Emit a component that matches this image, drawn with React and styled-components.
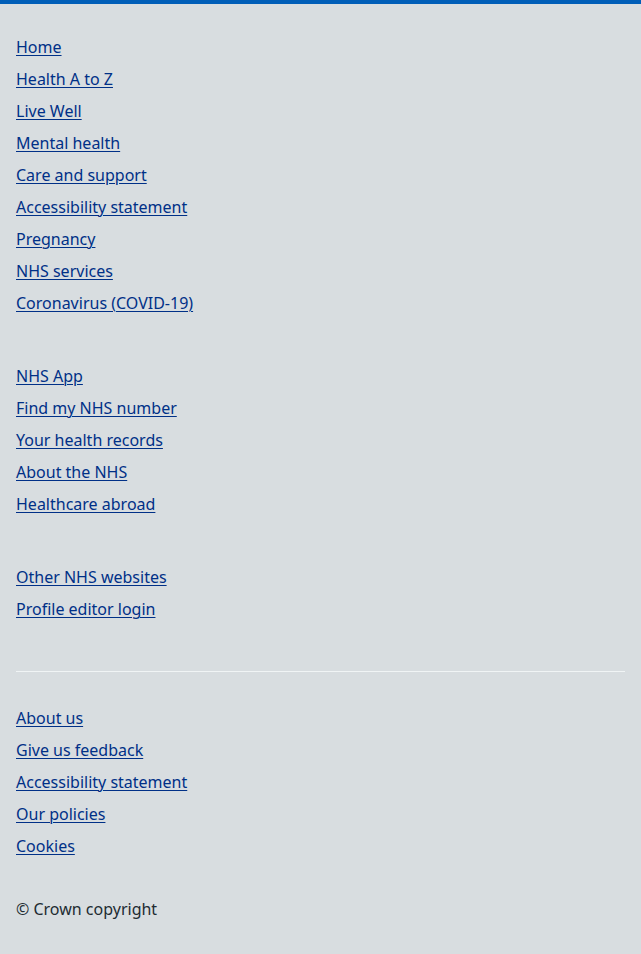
import React from 'react';
import styled, { createGlobalStyle } from 'styled-components';

const GlobalStyle = createGlobalStyle`
  html, body {
    margin: 0;
    padding: 0;
    background: #d8dde0;
  }
  body {
    font-family: 'Noto Sans', 'Liberation Sans', Arial, sans-serif;
    -webkit-font-smoothing: antialiased;
  }
`;

const primaryLinks = [
  'Home',
  'Health A to Z',
  'Live Well',
  'Mental health',
  'Care and support',
  'Accessibility statement',
  'Pregnancy',
  'NHS services',
  'Coronavirus (COVID-19)',
];

const secondaryLinks = [
  'NHS App',
  'Find my NHS number',
  'Your health records',
  'About the NHS',
  'Healthcare abroad',
];

const tertiaryLinks = ['Other NHS websites', 'Profile editor login'];

const metaLinks = [
  'About us',
  'Give us feedback',
  'Accessibility statement',
  'Our policies',
  'Cookies',
];

const Footer = styled.footer`
  min-height: 954px;
  box-sizing: border-box;
  border-top: 4px solid #005eb8;
  background: #d8dde0;
  padding: 31px 16px 34px;
`;

const Groups = styled.div`
  display: flex;
  flex-direction: column;
  gap: 49px;
`;

const List = styled.ul`
  list-style: none;
  margin: 0;
  padding: 0;
  display: flex;
  flex-direction: column;
  gap: 8px;
`;

const Item = styled.li`
  font-size: 16px;
  line-height: 24px;
`;

const Link = styled.a`
  color: #003087;
  text-decoration: underline;
  text-decoration-thickness: 1px;
  text-underline-offset: 2px;
  cursor: pointer;
`;

const Divider = styled.hr`
  border: 0;
  border-top: 1px solid #f0f4f5;
  margin: 50px 0 34px;
`;

const Copyright = styled.p`
  margin: 39px 0 0;
  font-size: 16px;
  line-height: 24px;
  color: #212b32;
`;

const LinkList = ({ links }) => (
  <List>
    {links.map((label, i) => (
      <Item key={i}>
        <Link href="#">{label}</Link>
      </Item>
    ))}
  </List>
);

export default function App() {
  return (
    <>
      <GlobalStyle />
      <Footer>
        <Groups>
          <LinkList links={primaryLinks} />
          <LinkList links={secondaryLinks} />
          <LinkList links={tertiaryLinks} />
        </Groups>
        <Divider />
        <LinkList links={metaLinks} />
        <Copyright>© Crown copyright</Copyright>
      </Footer>
    </>
  );
}
